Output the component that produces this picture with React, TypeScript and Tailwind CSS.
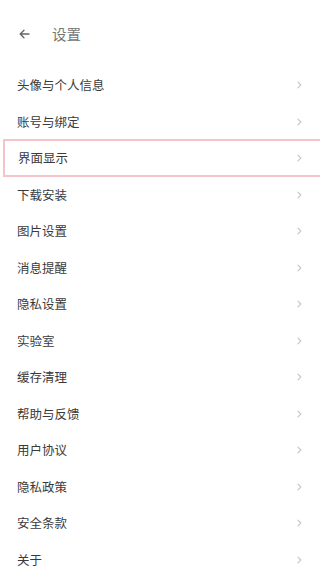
const items = [
  '头像与个人信息',
  '账号与绑定',
  '界面显示',
  '下载安装',
  '图片设置',
  '消息提醒',
  '隐私设置',
  '实验室',
  '缓存清理',
  '帮助与反馈',
  '用户协议',
  '隐私政策',
  '安全条款',
  '关于',
]

function Chevron() {
  return (
    <svg width="5" height="8" viewBox="0 0 5 8" fill="none">
      <path d="M1 1.2l2.8 2.8L1 6.8" stroke="#c4c4c4" strokeWidth="1.1" strokeLinecap="round" strokeLinejoin="round" />
    </svg>
  )
}

export default function App() {
  return (
    <div
      className="w-[320px] h-[569px] overflow-hidden bg-white"
      style={{ fontFamily: '"Noto Sans CJK SC", "Noto Sans", sans-serif' }}
    >
      {/* Header */}
      <div className="h-[67px] flex items-start pt-[24px] pl-[19px]">
        <div className="flex items-center h-[20px]">
          <svg width="11" height="10" viewBox="0 0 11 10" fill="none">
            <path d="M10 5H1.5M5 1.2L1.2 5 5 8.8" stroke="#666" strokeWidth="1.3" strokeLinecap="round" strokeLinejoin="round" />
          </svg>
          <span className="ml-[22px] text-[14.5px] text-[#777] leading-none">设置</span>
        </div>
      </div>

      {/* List */}
      <div className="flex flex-col">
        {items.map((item) => {
          const active = item === '界面显示'
          return (
            <div
              key={item}
              className={
                active
                  ? 'h-[38px] -my-[0.75px] ml-[3px] border-y-2 border-l-2 border-[#f5c4cb] flex items-center justify-between pl-[13px] pr-[18px]'
                  : 'h-[36.5px] flex items-center justify-between pl-[17px] pr-[18px]'
              }
            >
              <span className="text-[12.5px] text-[#3a3a3a] leading-none">{item}</span>
              <Chevron />
            </div>
          )
        })}
      </div>
    </div>
  )
}
